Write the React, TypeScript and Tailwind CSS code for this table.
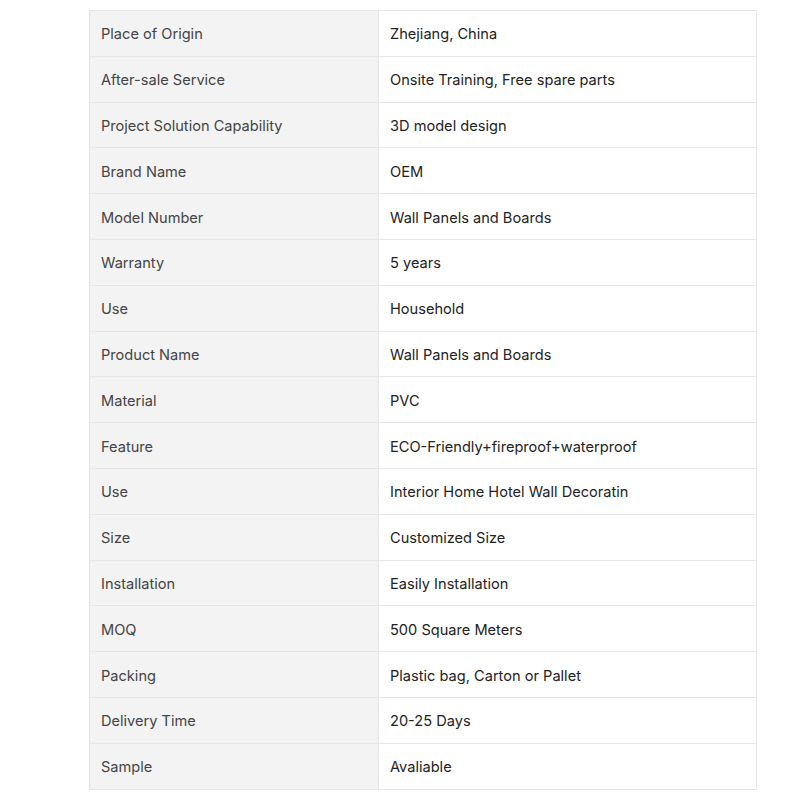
const ROWS: [string, string][] = [
  ['Place of Origin', 'Zhejiang, China'],
  ['After-sale Service', 'Onsite Training, Free spare parts'],
  ['Project Solution Capability', '3D model design'],
  ['Brand Name', 'OEM'],
  ['Model Number', 'Wall Panels and Boards'],
  ['Warranty', '5 years'],
  ['Use', 'Household'],
  ['Product Name', 'Wall Panels and Boards'],
  ['Material', 'PVC'],
  ['Feature', 'ECO-Friendly+fireproof+waterproof'],
  ['Use', 'Interior Home Hotel Wall Decoratin'],
  ['Size', 'Customized Size'],
  ['Installation', 'Easily Installation'],
  ['MOQ', '500 Square Meters'],
  ['Packing', 'Plastic bag, Carton or Pallet'],
  ['Delivery Time', '20-25 Days'],
  ['Sample', 'Avaliable'],
];

export default function App() {
  return (
    <div className="min-h-screen bg-white pt-[10px] font-['Inter',sans-serif]">
      <table className="ml-[89px] w-[668px] border-collapse text-[14.6px]">
        <tbody>
          {ROWS.map(([label, value], i) => (
            <tr key={i} className="h-[45.8px]">
              <td className="w-[289px] border border-[#e6e6e6] bg-[#f3f3f3] pl-[11px] pr-3 pt-[4px] align-middle text-[#444]">
                {label}
              </td>
              <td className="border border-[#e6e6e6] bg-white pl-[11px] pr-3 pt-[4px] align-middle text-[#222]">
                {value}
              </td>
            </tr>
          ))}
        </tbody>
      </table>
    </div>
  );
}
